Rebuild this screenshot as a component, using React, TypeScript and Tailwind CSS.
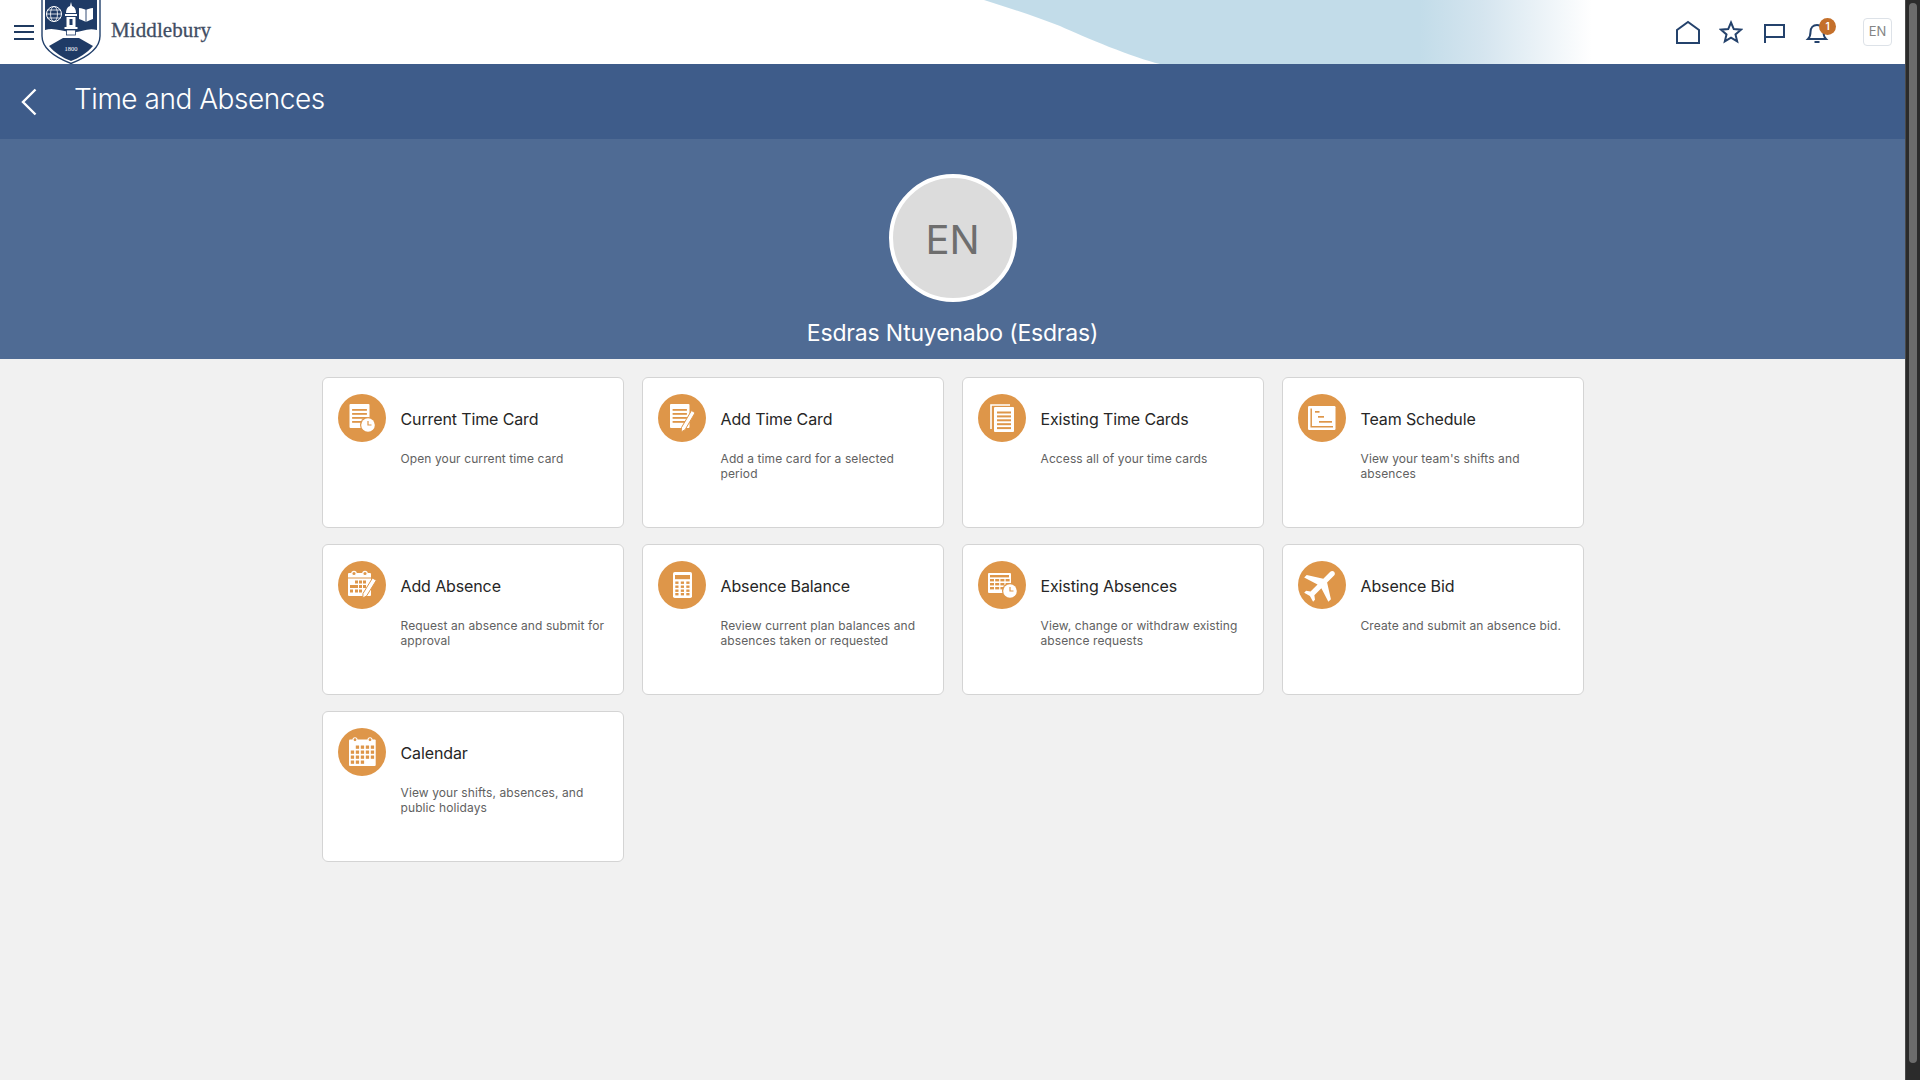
import type { ReactNode } from "react"

const ORANGE = "#de9649"

// white doc with orange text lines, used by a few of the tile icons
function Doc({ x, y, w, h }: { x: number; y: number; w: number; h: number }) {
  const lines = [0, 1, 2, 3]
  return (
    <>
      <rect x={x} y={y} width={w} height={h} rx="1" fill="#fff" />
      {lines.map((i) => (
        <rect key={i} x={x + 2.6} y={y + 5 + i * 4} width={w - 5.2} height="1.8" fill={ORANGE} />
      ))}
    </>
  )
}

function Clock({ cx, cy }: { cx: number; cy: number }) {
  return (
    <>
      <circle cx={cx} cy={cy} r="8" fill={ORANGE} />
      <circle cx={cx} cy={cy} r="6.8" fill="#fff" />
      <path d={`M${cx} ${cy - 4}v4h3.5`} fill="none" stroke={ORANGE} strokeWidth="1.2" />
    </>
  )
}

function Pencil({ d }: { d: string }) {
  return <path d={d} fill="#fff" stroke={ORANGE} strokeWidth="1" />
}

const icons: Record<string, ReactNode> = {
  currentCard: (
    <>
      <Doc x={11.5} y={10} w={20} h={24} />
      <Clock cx={30} cy={31} />
    </>
  ),
  addCard: (
    <>
      <Doc x={12} y={10} w={19.5} h={24} />
      <Pencil d="M33.5 16.5l3.6 2.2-10 17-3.9 2.2.3-4.4z" />
    </>
  ),
  existingCards: (
    <>
      <path d="M13 35V11h19" fill="none" stroke="#fff" strokeWidth="1.6" />
      <rect x="16" y="13" width="20" height="25" rx="1" fill="#fff" />
      {[0, 1, 2, 3, 4].map((i) => (
        <rect key={i} x="19" y={17.5 + i * 3.9} width="14" height="2" fill={ORANGE} />
      ))}
    </>
  ),
  teamSchedule: (
    <>
      <rect x="10" y="12" width="27.5" height="24" rx="1.2" fill="#fff" />
      <path d="M13.2 14.5V32.8H35" fill="none" stroke={ORANGE} strokeWidth="1.5" />
      <rect x="17" y="17" width="4.5" height="1.7" fill={ORANGE} />
      <rect x="20" y="22" width="6" height="1.7" fill={ORANGE} />
      <rect x="21" y="27" width="13" height="1.7" fill={ORANGE} />
    </>
  ),
  addAbsence: (
    <>
      <rect x="10" y="12" width="23" height="23" rx="1" fill="#fff" />
      <circle cx="16" cy="12.5" r="2.2" fill={ORANGE} stroke="#fff" strokeWidth="1.2" />
      <circle cx="27" cy="12.5" r="2.2" fill={ORANGE} stroke="#fff" strokeWidth="1.2" />
      <rect x="10" y="16.5" width="23" height="1" fill={ORANGE} />
      {[
        [17, 19.5], [21, 19.5], [25, 19.5],
        [21, 24], [25, 24],
        [12, 28.5], [17, 28.5], [21, 28.5],
      ].map(([x, y]) => (
        <rect key={`${x}-${y}`} x={x} y={y} width="3" height="3" fill={ORANGE} />
      ))}
      <rect x="12" y="24" width="8" height="3" fill={ORANGE} />
      <Pencil d="M34.5 17l3.8 2.3-9.6 15.5-3.9 2.3.2-4.6z" />
    </>
  ),
  balance: (
    <>
      <rect x="15" y="11" width="19" height="26" rx="1.8" fill="#fff" />
      <rect x="17" y="14" width="15" height="4.2" fill={ORANGE} />
      {[20.5, 24.5, 28.5, 32].map((y) =>
        [17.3, 22.8, 28.3].map((x) => (
          <rect key={`${x}-${y}`} x={x} y={y} width="3.2" height="2.4" fill={ORANGE} />
        )),
      )}
    </>
  ),
  existingAbsences: (
    <>
      <rect x="10" y="12" width="23" height="20" rx="1" fill="#fff" />
      <rect x="12" y="14" width="19" height="2.4" fill={ORANGE} />
      {[18, 22, 26].map((y) =>
        [12, 17.2, 22.4, 27.6].map((x) => (
          <rect key={`${x}-${y}`} x={x} y={y} width="4" height="2.4" fill={ORANGE} />
        )),
      )}
      <Clock cx={32} cy={30} />
    </>
  ),
  bid: (
    <g transform="rotate(45 24 24) translate(2.5 2.5) scale(1.8)">
      <path
        fill="#fff"
        d="M21 16v-2l-8-5V3.5c0-.83-.67-1.5-1.5-1.5S10 2.67 10 3.5V9l-8 5v2l8-2.5V19l-2 1.5V22l3.5-1 3.5 1v-1.5L13 19v-5.5l8 2.5z"
      />
    </g>
  ),
  calendar: (
    <>
      <rect x="11" y="11.5" width="26.7" height="26.5" rx="1" fill="#fff" />
      <circle cx="17" cy="11.8" r="2" fill={ORANGE} stroke="#fff" strokeWidth="1.1" />
      <circle cx="32" cy="11.8" r="2" fill={ORANGE} stroke="#fff" strokeWidth="1.1" />
      {[
        [0, 1], [0, 2], [0, 3], [0, 4],
        [1, 0], [1, 1], [1, 2], [1, 3], [1, 4],
        [2, 0], [2, 1], [2, 2], [2, 3], [2, 4],
        [3, 0], [3, 1], [3, 2],
      ].map(([r, c]) => (
        <rect key={`${r}-${c}`} x={12.8 + c * 5} y={17.5 + r * 5} width="3.3" height="3.3" fill={ORANGE} />
      ))}
    </>
  ),
}

const tiles = [
  { icon: "currentCard", title: "Current Time Card", text: "Open your current time card" },
  { icon: "addCard", title: "Add Time Card", text: "Add a time card for a selected period" },
  { icon: "existingCards", title: "Existing Time Cards", text: "Access all of your time cards" },
  { icon: "teamSchedule", title: "Team Schedule", text: "View your team's shifts and absences" },
  { icon: "addAbsence", title: "Add Absence", text: "Request an absence and submit for approval" },
  { icon: "balance", title: "Absence Balance", text: "Review current plan balances and absences taken or requested" },
  { icon: "existingAbsences", title: "Existing Absences", text: "View, change or withdraw existing absence requests" },
  { icon: "bid", title: "Absence Bid", text: "Create and submit an absence bid." },
  { icon: "calendar", title: "Calendar", text: "View your shifts, absences, and public holidays" },
]

function Tile({ icon, title, text }: { icon: string; title: string; text: string }) {
  return (
    <div className="flex h-[151px] gap-[15px] rounded-[6px] border border-[#d4d4d4] bg-white pl-[15px] pr-[13px] pt-[16px]">
      <svg viewBox="0 0 48 48" className="h-12 w-12 shrink-0">
        <circle cx="24" cy="24" r="24" fill={ORANGE} />
        {icons[icon]}
      </svg>
      <div className="min-w-0 flex-1">
        <div className="mt-px flex h-12 items-center text-[16px] tracking-[-0.12px] text-[#262626]">{title}</div>
        <p className="mt-2 text-[12px] leading-[15px] tracking-[0.1px] text-[#616161]">{text}</p>
      </div>
    </div>
  )
}

function Logo() {
  return (
    <svg viewBox="0 0 60 64" className="ml-[7px] h-16 w-[60px] shrink-0">
      <path d="M1 -2H59V36C59 50 44 58 30 63.5C16 58 1 50 1 36Z" fill="#fff" stroke="#22406b" strokeWidth="1.4" />
      <path d="M4 0H56V30C46 27 40 33 30 32C20 31 12 27 4 30Z" fill="#1f3b66" />
      {/* globe */}
      <circle cx="13" cy="14" r="7.5" fill="none" stroke="#fff" strokeWidth="1" />
      <ellipse cx="13" cy="14" rx="3.5" ry="7.5" fill="none" stroke="#fff" strokeWidth="0.8" />
      <path d="M5.5 14h15M6.5 10h13M6.5 18h13" stroke="#fff" strokeWidth="0.8" />
      {/* tower */}
      <path d="M30 2l1 4c3 1 4 4 4 7H25c0-3 1-6 4-7z" fill="#fff" />
      <rect x="24" y="14" width="12" height="2" fill="#fff" />
      <rect x="25.5" y="17" width="9" height="10" fill="#fff" />
      <rect x="28.5" y="19" width="3" height="6" fill="#1f3b66" />
      <rect x="23.5" y="27" width="13" height="2" fill="#fff" />
      <rect x="25.5" y="30" width="9" height="5" fill="#fff" stroke="#1f3b66" strokeWidth="0.8" />
      {/* book */}
      <path d="M38 8c3 0 5 1 7 2 2-1 4-2 7-2v11c-3 1-5 2-7 3-2-1-4-2-7-3z" fill="#fff" />
      <path d="M45 10v12" stroke="#1f3b66" strokeWidth="0.9" />
      {/* lower field */}
      <path d="M22 38H38L52 46C46 53 38 58 30 61C22 58 14 53 8 46Z" fill="#1f3b66" />
      <text x="30" y="50.5" textAnchor="middle" fontSize="6.5" fill="#fff" className="font-['Liberation_Serif',serif]">
        1800
      </text>
    </svg>
  )
}

function Wave() {
  return (
    <svg viewBox="0 0 640 64" className="absolute left-[984px] top-0 h-16 w-[640px]">
      <defs>
        <linearGradient id="fade" x1="0" x2="1" y1="0" y2="0">
          <stop offset="0.68" stopColor="#c2dce9" />
          <stop offset="0.78" stopColor="#d5e5ef" />
          <stop offset="0.95" stopColor="#ffffff" />
        </linearGradient>
      </defs>
      <path d="M0 0C26 8 52 17 76 26C100 37 150 58 176 64H640V0Z" fill="url(#fade)" />
    </svg>
  )
}

function HeaderIcons() {
  const cls = "h-6 w-6 fill-none stroke-[#24426c] stroke-2"
  return (
    <div className="relative ml-auto mr-[13px] flex items-center">
      <div className="mr-[34px] flex items-center gap-[19px]">
        <svg viewBox="0 0 24 24" className={cls}>
          <path d="M1 23V10L12 2L23 10V23Z" />
        </svg>
        <svg viewBox="0 0 24 24" className={cls}>
          <path d="M12 2.5l2.8 6.6 7.2.6-5.5 4.7 1.7 7-6.2-3.7-6.2 3.7 1.7-7L2 9.7l7.2-.6z" />
        </svg>
        <svg viewBox="0 0 24 24" className={cls}>
          <path d="M3 23V5H22V17H3" />
        </svg>
        <div className="relative h-6 w-6">
          <svg viewBox="0 0 24 24" className={cls}>
            <path d="M3 19c2-2 2.5-3 2.5-7 0-4 2.5-7 6.5-7s6.5 3 6.5 7c0 4 .5 5 2.5 7ZM9.5 22h5" />
          </svg>
          <span className="absolute left-[14px] top-[-2.5px] flex h-[17px] w-[17px] items-center justify-center rounded-full bg-[#c4702b] text-[10px] font-semibold text-white">
            1
          </span>
        </div>
      </div>
      <div className="flex h-[28px] w-[29px] items-center justify-center rounded-[4px] border border-[#dde2e8] text-[13px] text-[#858585]">
        EN
      </div>
    </div>
  )
}

export default function App() {
  return (
    <div className="flex h-screen overflow-hidden bg-[#f1f1f1] font-['Inter',sans-serif]">
      <div className="min-w-0 flex-1">
        <header className="relative flex h-16 items-center bg-white">
          <Wave />
          <div className="relative ml-[14px] flex h-[15px] w-5 flex-col justify-between">
            <span className="h-0.5 bg-[#1f3a60]" />
            <span className="h-0.5 bg-[#1f3a60]" />
            <span className="h-0.5 bg-[#1f3a60]" />
          </div>
          <div className="relative">
            <Logo />
          </div>
          <span className="relative mb-[3px] ml-[10px] font-['Liberation_Serif',serif] text-[21px] tracking-[0.1px] text-[#3f4d63] [-webkit-text-stroke:0.3px_#3f4d63]">
            Middlebury
          </span>
          <HeaderIcons />
        </header>

        <div className="flex h-[75px] items-center bg-[#3e5c8a]">
          <svg viewBox="0 0 16 28" className="ml-[21px] h-[30px] w-4 fill-none stroke-white stroke-[2.4]">
            <path d="M14.5 1.5L2 14L14.5 26.5" />
          </svg>
          <h1 className="mb-[5px] ml-[37px] text-[28px] font-light tracking-[-0.47px] text-white">Time and Absences</h1>
        </div>

        <section className="flex h-[220px] flex-col items-center bg-[#4f6b94] pt-[35px]">
          <div className="flex h-[128px] w-[128px] items-center justify-center rounded-full border-4 border-white bg-[#dcdcdc] pt-[4px] text-[40px] text-[#6e6e6e]">
            EN
          </div>
          <div className="mt-[15px] text-[23px] leading-[32px] tracking-[-0.2px] text-white">Esdras Ntuyenabo (Esdras)</div>
        </section>

        <main className="grid grid-cols-[repeat(4,302px)] justify-center gap-x-[18px] gap-y-[16px] pt-[18px]">
          {tiles.map((t) => (
            <Tile key={t.title} {...t} />
          ))}
        </main>
      </div>

      {/* scrollbar of the captured window */}
      <div className="w-[15px] shrink-0 border-l border-[#4a4a4a] bg-[#2b2b2b] pb-[17px] pl-[3px] pr-[3px] pt-[3px]">
        <div className="h-full w-2 rounded-full bg-[#6c6c6c]" />
      </div>
    </div>
  )
}
